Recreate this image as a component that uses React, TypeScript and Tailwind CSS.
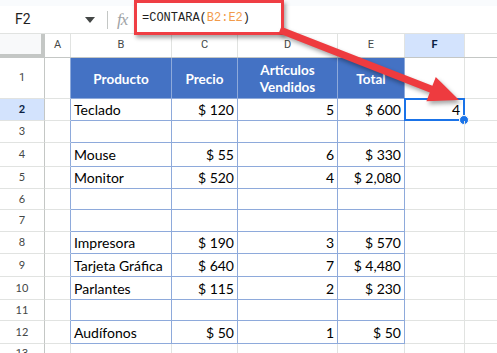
import React from 'react';

const cols = [
    { key: 'A', w: 'w-[26px]' },
    { key: 'B', w: 'w-[101px]' },
    { key: 'C', w: 'w-[66px]' },
    { key: 'D', w: 'w-[100px]' },
    { key: 'E', w: 'w-[67px]' },
    { key: 'F', w: 'w-[60px]' },
    { key: '', w: 'w-[40px]' },
];

type Row = { n: number; h: string; cells?: string[] };

const rows: Row[] = [
    { n: 2, h: 'h-[22px]', cells: ['Teclado', '$ 120', '5', '$ 600'] },
    { n: 3, h: 'h-[22px]' },
    { n: 4, h: 'h-[24px]', cells: ['Mouse', '$ 55', '6', '$ 330'] },
    { n: 5, h: 'h-[22px]', cells: ['Monitor', '$ 520', '4', '$ 2,080'] },
    { n: 6, h: 'h-[21px]' },
    { n: 7, h: 'h-[22px]' },
    { n: 8, h: 'h-[22px]', cells: ['Impresora', '$ 190', '3', '$ 570'] },
    { n: 9, h: 'h-[23px]', cells: ['Tarjeta Gráfica', '$ 640', '7', '$ 4,480'] },
    { n: 10, h: 'h-[23px]', cells: ['Parlantes', '$ 115', '2', '$ 230'] },
    { n: 11, h: 'h-[21px]' },
    { n: 12, h: 'h-[23px]', cells: ['Audífonos', '$ 50', '1', '$ 50'] },
];

const RowHead = ({ n, active }: { n: number; active?: boolean }) => (
    <div
        className={`w-[45px] shrink-0 h-full flex items-center justify-center border-r border-b border-r-[#c4c7c5] border-b-[#e1e3e1] text-[11px] ${
            active ? 'bg-[#d3e3fd] text-[#0b1f44] font-bold' : 'bg-white text-[#444746]'
        }`}
    >
        {n}
    </div>
);

const App = () => {
    return (
        <div className="relative w-[497px] h-[353px] overflow-hidden bg-white font-['Roboto',sans-serif]">
            {/* Formula bar */}
            <div className="h-[6px] bg-[#f9fbfd]" />
            <div className="h-[28px] flex items-center border-b border-[#e1e3e1] bg-white">
                <div className="w-[80px] pl-[15px] text-[14px] text-[#1f1f1f]">F2</div>
                <svg width="10" height="6" viewBox="0 0 10 6" className="ml-[5px]">
                    <path d="M0 0h10L5 6z" fill="#444746" />
                </svg>
                <div className="ml-[12px] w-px h-[18px] bg-[#c4c7c5]" />
                <div className="ml-[9px] text-[17px] leading-none italic text-[#a0a3a6] font-['Liberation_Serif',serif] tracking-[-1px]">
                    fx
                </div>
            </div>

            {/* red box round the formula */}
            <div className="absolute left-[134px] top-0 w-[150px] h-[35px] border-[3.5px] border-[#ef3e44] shadow-[2px_3px_4px_rgba(0,0,0,0.35)] flex items-center pl-[5px] bg-white">
                <span className="font-['Liberation_Mono',monospace] text-[12px] text-[#1f1f1f] pt-[1px]">
                    =CONTARA(<span className="text-[#f29b4b]">B2:E2</span>)
                </span>
            </div>

            {/* Column headers */}
            <div className="h-[24px] flex border-b border-[#c4c7c5]">
                <div className="w-[45px] shrink-0 bg-[#f8f9fa] border-r-[4px] border-b-[3px] border-[#c4c7c5]" />
                {cols.map((c, i) => (
                    <div
                        key={i}
                        className={`${c.w} shrink-0 flex items-center justify-center border-r border-[#e1e3e1] text-[11px] ${
                            c.key === 'F' ? 'bg-[#d3e3fd] text-[#0b1f44] font-bold' : 'text-[#444746]'
                        }`}
                    >
                        {c.key}
                    </div>
                ))}
            </div>

            {/* Row 1: table header */}
            <div className="h-[41px] flex">
                <RowHead n={1} />
                <div className="w-[26px] shrink-0 border-r border-b border-r-[#8eaadb] border-b-[#e1e3e1]" />
                <div className="flex font-['Lato',sans-serif] font-bold text-[13.5px] text-white leading-[17px]">
                    <div className="w-[101px] flex items-center justify-center bg-[#4472c4] border-r border-b border-[#8eaadb] pt-[2px]">Producto</div>
                    <div className="w-[66px] flex items-center justify-center bg-[#4472c4] border-r border-b border-[#8eaadb] pt-[2px]">Precio</div>
                    <div className="w-[100px] flex items-center justify-center text-center bg-[#4472c4] border-r border-b border-[#8eaadb] pt-[2px]">
                        Artículos
                        <br />
                        Vendidos
                    </div>
                    <div className="w-[67px] flex items-center justify-center bg-[#4472c4] border-r border-b border-[#8eaadb] pt-[2px]">Total</div>
                </div>
                <div className="w-[60px] shrink-0 border-r border-b border-[#e1e3e1]" />
                <div className="w-[40px] shrink-0 border-b border-[#e1e3e1]" />
            </div>

            {/* Data rows */}
            {rows.map((r) => (
                <div key={r.n} className={`${r.h} flex font-['Lato',sans-serif] text-[14px] text-black`}>
                    <RowHead n={r.n} active={r.n === 2} />
                    <div className="w-[26px] shrink-0 border-r border-b border-r-[#8eaadb] border-b-[#e1e3e1]" />
                    <div className="w-[101px] shrink-0 flex items-center pl-[3px] border-r border-b border-[#8eaadb]">{r.cells?.[0]}</div>
                    <div className="w-[66px] shrink-0 flex items-center justify-end pr-[3px] border-r border-b border-[#8eaadb]">{r.cells?.[1]}</div>
                    <div className="w-[100px] shrink-0 flex items-center justify-end pr-[3px] border-r border-b border-[#8eaadb]">{r.cells?.[2]}</div>
                    <div className="w-[67px] shrink-0 flex items-center justify-end pr-[3px] border-r border-b border-[#8eaadb]">{r.cells?.[3]}</div>
                    <div className="relative w-[60px] shrink-0 flex items-center justify-end pr-[4px] border-r border-b border-[#e1e3e1]">
                        {r.n === 2 && (
                            <>
                                4
                                <div className="absolute -left-px -top-px w-[61px] h-[23px] border-2 border-[#1a73e8]" />
                                <div className="absolute -right-[5px] -bottom-[5px] w-[10px] h-[10px] rounded-full bg-[#1a73e8] border border-white" />
                            </>
                        )}
                    </div>
                    <div className="w-[40px] shrink-0 border-b border-[#e1e3e1]" />
                </div>
            ))}

            {/* Row 13, cut off */}
            <div className="h-[22px] flex">
                <RowHead n={13} />
                <div className="w-[26px] shrink-0 border-r border-[#e1e3e1]" />
                <div className="w-[101px] shrink-0 border-r border-[#e1e3e1]" />
                <div className="w-[66px] shrink-0 border-r border-[#e1e3e1]" />
                <div className="w-[100px] shrink-0 border-r border-[#e1e3e1]" />
                <div className="w-[67px] shrink-0 border-r border-[#e1e3e1]" />
                <div className="w-[60px] shrink-0 border-r border-[#e1e3e1]" />
            </div>

            {/* Red arrow */}
            <svg
                className="absolute left-0 top-0 pointer-events-none drop-shadow-[2px_3px_2px_rgba(0,0,0,0.35)]"
                width="497"
                height="353"
            >
                <polygon
                    points="281.3,26.7 432.4,85.8 435.8,77 459,100 426.4,101.2 429.8,92.4 278.7,33.3"
                    fill="#ee3b3f"
                />
            </svg>
        </div>
    );
};

export default App;
